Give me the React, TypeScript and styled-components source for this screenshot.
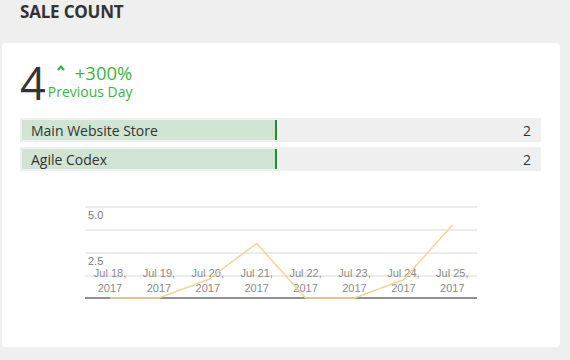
import React from 'react'
import styled, { createGlobalStyle } from 'styled-components'

const Global = createGlobalStyle`
  body {
    margin: 0;
    background: #efefef;
    font-family: "Open Sans", "Liberation Sans", sans-serif;
    color: #333;
  }
`

const Page = styled.div`
  width: 558px;
  padding-left: 2px;
`

const Header = styled.div`
  height: 43px;
  padding-left: 18px;
`

const Title = styled.h2`
  margin: 0;
  font-size: 17px;
  line-height: 24px;
  font-weight: 700;
  color: #333;
  letter-spacing: -0.2px;
`

const Card = styled.div`
  background: #fff;
  border-radius: 4px;
  padding: 17px 19px 12px 18px;
`

const Stat = styled.div`
  display: flex;
  align-items: flex-start;
  height: 45px;
`

const BigNum = styled.div`
  font-size: 45px;
  line-height: 45px;
  font-weight: 400;
  color: #333;
`

const Change = styled.div`
  margin: 3px 0 0 2px;
  color: #3bb246;
`

const Pct = styled.div`
  display: flex;
  align-items: flex-start;
  gap: 10px;
  padding-left: 9px;
  font-size: 18.5px;
  line-height: 20px;
`

const Caret = styled.svg`
  margin-top: 2px;
`

const Sub = styled.div`
  font-size: 14px;
  line-height: 18px;
`

const List = styled.div`
  display: flex;
  flex-direction: column;
  gap: 5px;
  margin-top: 13px;
`

const Row = styled.div`
  position: relative;
  display: flex;
  align-items: center;
  justify-content: space-between;
  height: 24px;
  padding: 2px 10px 2px 2px;
  box-sizing: border-box;
  background: #efefef;
  font-size: 14px;
  color: #333;
`

const Fill = styled.div<{ pct: number }>`
  position: absolute;
  left: 2px;
  top: 2px;
  bottom: 2px;
  width: ${({ pct }) => pct}%;
  background: #cfe5d1;
  border-right: 2px solid #1f8f2b;
`

const Label = styled.span`
  position: relative;
  padding-left: 9px;
`

const Count = styled.span`
  position: relative;
`

const Chart = styled.svg`
  display: block;
  margin-top: 14px;
`

const rows = [
  { name: 'Main Website Store', count: 2 },
  { name: 'Agile Codex', count: 2 },
]

const days = ['Jul 18,', 'Jul 19,', 'Jul 20,', 'Jul 21,', 'Jul 22,', 'Jul 23,', 'Jul 24,', 'Jul 25,']
const values = [0, 0, 1, 3, 0, 0, 1, 4]

const SaleChart = () => {
  const px = (i: number) => 90 + i * 48.9
  const py = (v: number) => 113 - v * 18.2
  const pts = values.map((v, i) => `${px(i)},${py(v)}`).join(' ')
  return (
    <Chart width={521} height={150}>
      {[22, 45, 68, 91].map((y) => (
        <line key={y} x1={65} x2={457} y1={y} y2={y} stroke="#e6e6e6" strokeWidth={1.6} />
      ))}
      <g fontFamily="'Liberation Sans', Arial, sans-serif" fontSize={11} fill="#7a7a7a">
        <text x={68} y={34}>5.0</text>
        <text x={68} y={80}>2.5</text>
        {days.map((d, i) => (
          <text key={d} x={px(i)} y={92} textAnchor="middle" fill="#8a8a8a">
            <tspan x={px(i)}>{d}</tspan>
            <tspan x={px(i)} dy={14.7}>2017</tspan>
          </text>
        ))}
      </g>
      <line x1={65} x2={457} y1={113} y2={113} stroke="#6b6b6b" strokeWidth={1.6} />
      <polyline points={pts} fill="none" stroke="#efd693" strokeWidth={1.5} />
    </Chart>
  )
}

const App = () => {
  return (
    <Page>
      <Global />
      <Header>
        <Title>SALE COUNT</Title>
      </Header>
      <Card>
        <Stat>
          <BigNum>4</BigNum>
          <Change>
            <Pct>
              <Caret width={8} height={6} viewBox="0 0 8 6">
                <polyline points="1,5 4,1.6 7,5" fill="none" stroke="#3bb246" strokeWidth={2.2} />
              </Caret>
              <span>+300%</span>
            </Pct>
            <Sub>Previous Day</Sub>
          </Change>
        </Stat>
        <List>
          {rows.map((r) => (
            <Row key={r.name}>
              <Fill pct={48.5} />
              <Label>{r.name}</Label>
              <Count>{r.count}</Count>
            </Row>
          ))}
        </List>
        <SaleChart />
      </Card>
    </Page>
  )
}

export default App
